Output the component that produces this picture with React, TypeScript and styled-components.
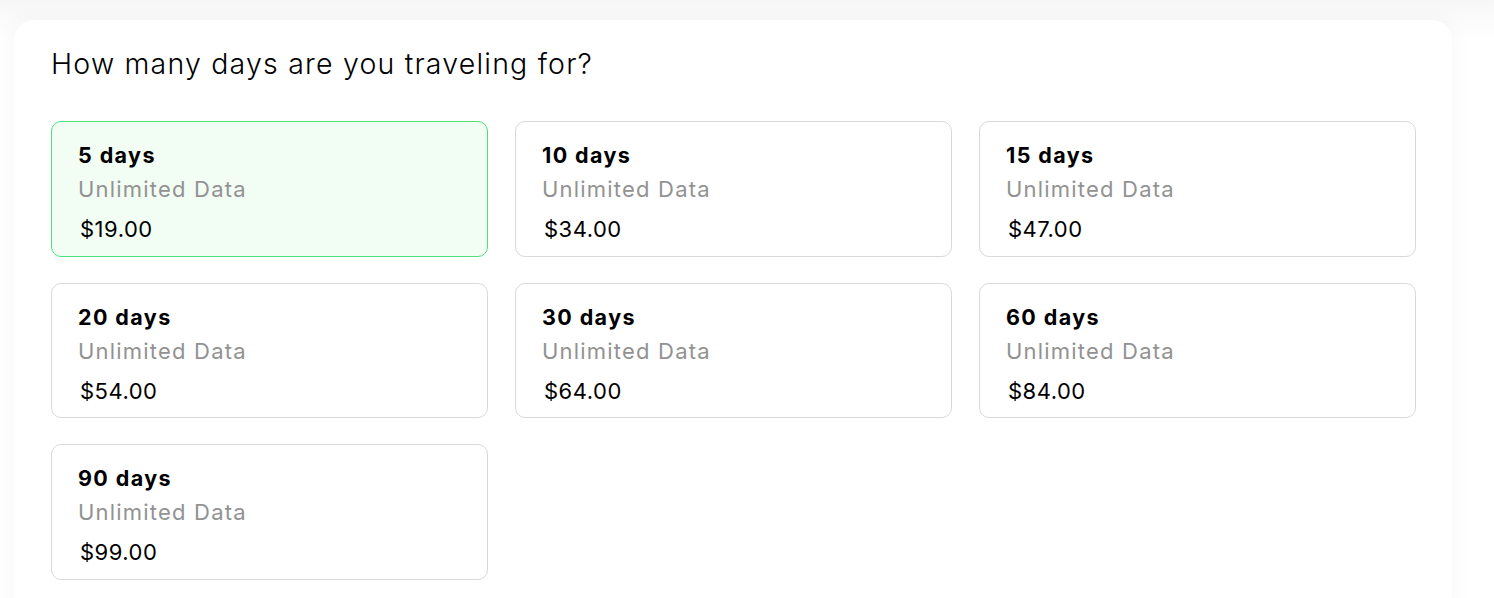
import { useState } from "react";
import styled, { createGlobalStyle } from "styled-components";

type Plan = {
  days: number;
  price: string;
};

const plans: Plan[] = [
  { days: 5, price: "$19.00" },
  { days: 10, price: "$34.00" },
  { days: 15, price: "$47.00" },
  { days: 20, price: "$54.00" },
  { days: 30, price: "$64.00" },
  { days: 60, price: "$84.00" },
  { days: 90, price: "$99.00" },
];

export default function App() {
  const [selected, setSelected] = useState(5);

  return (
    <>
      <GlobalStyle />
      <Page>
        <Panel>
          <Heading>How many days are you traveling for?</Heading>
          <Grid>
            {plans.map((plan) => (
              <Option
                key={plan.days}
                $active={plan.days === selected}
                onClick={() => setSelected(plan.days)}
              >
                <Title>{`${plan.days} days`}</Title>
                <Sub>Unlimited Data</Sub>
                <Price>{plan.price}</Price>
              </Option>
            ))}
          </Grid>
        </Panel>
      </Page>
    </>
  );
}

const GlobalStyle = createGlobalStyle`
  body {
    margin: 0;
    background: #ffffff;
    font-family: Inter, "Noto Sans", sans-serif;
    color: #000;
  }
`;

const Page = styled.div`
  height: 598px;
  overflow: hidden;
  padding: 20px 42px 0 14px;
  background: linear-gradient(#f6f6f6, #fbfbfb 20px, #ffffff 40px);
`;

const Panel = styled.section`
  background: #ffffff;
  border-radius: 20px;
  box-shadow: 0 0 22px rgba(0, 0, 0, 0.045);
  padding: 24px 36px 40px 37px;
`;

const Heading = styled.h2`
  margin: 0 0 37px;
  font-size: 28.5px;
  line-height: 40px;
  font-weight: 300;
  letter-spacing: 1.2px;
`;

const Grid = styled.div`
  display: grid;
  grid-template-columns: repeat(3, 437px);
  column-gap: 27px;
  row-gap: 26px;
`;

const Option = styled.button<{ $active?: boolean }>`
  all: unset;
  box-sizing: border-box;
  height: 135.5px;
  display: flex;
  flex-direction: column;
  padding: 18px 26px 0;
  border-radius: 10px;
  border: 1px solid ${({ $active }) => ($active ? "#4fe07c" : "#d9d9d9")};
  background: ${({ $active }) => ($active ? "#f2fdf4" : "#ffffff")};
  cursor: pointer;
`;

const Title = styled.span`
  font-size: 21.5px;
  line-height: 30px;
  font-weight: 700;
  letter-spacing: 1.4px;
`;

const Sub = styled.span`
  margin-top: 4px;
  font-size: 22px;
  line-height: 30px;
  letter-spacing: 1.2px;
  color: #929292;
`;

const Price = styled.span`
  margin-top: 10px;
  padding-left: 2px;
  font-size: 22px;
  line-height: 30px;
  letter-spacing: 0.5px;
`;
